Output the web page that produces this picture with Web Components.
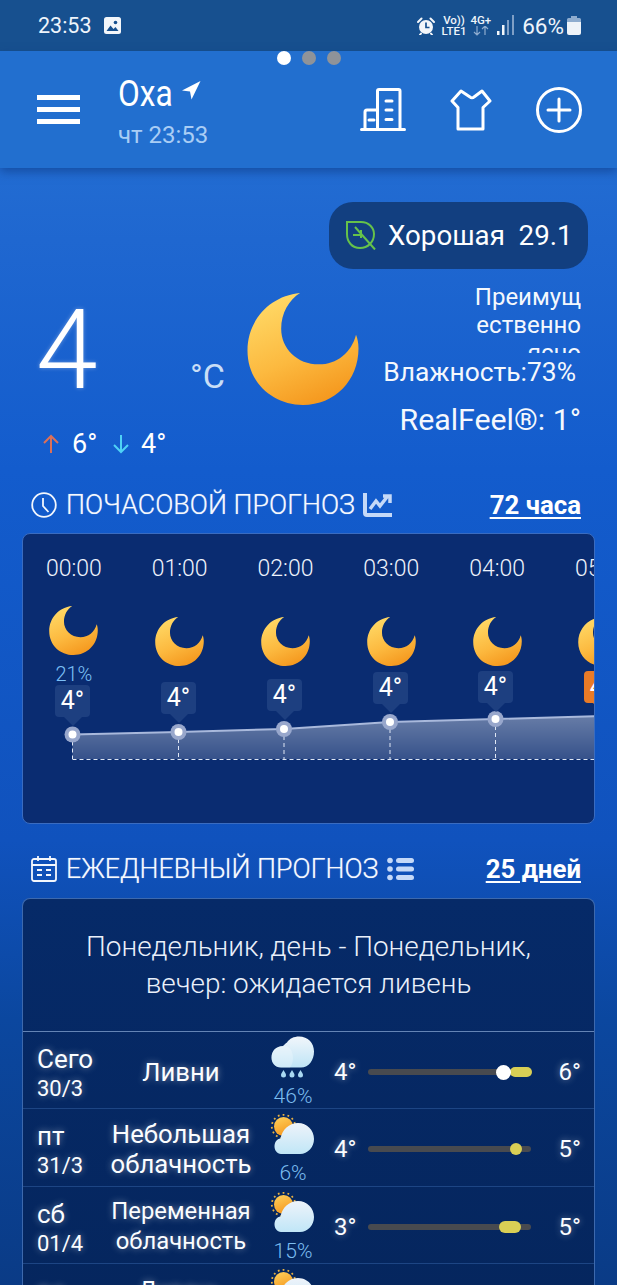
<!DOCTYPE html>
<html lang="ru"><head><meta charset="utf-8"><title>Погода</title>
<style>
html,body{margin:0;padding:0}
body{width:617px;height:1285px;overflow:hidden;font-family:Roboto,"Liberation Sans",sans-serif;color:#fff;background:#0a3b86}
weather-app{display:block}
</style></head><body>
<weather-app></weather-app>
<script>
const def=(n,html)=>{customElements.define(n,class extends HTMLElement{
 constructor(){super();const r=this.attachShadow({mode:'open'});r.innerHTML=typeof html==='function'?html(this):html;}
 connectedCallback(){if(typeof html==='function')this.shadowRoot.innerHTML=html(this);}
});};
const MOON='M53 0C22 3 0 28 0 58C0 90 25 113 56 113C88 113 112 88 112 56C112 50 111 46 109.5 42C105 60 90 72 72 72C50 72 34 56 34 36C34 20 42 7 53 0Z';
let uid=0;
def('moon-icon',h=>{const id='m'+(++uid);return `<style>:host{display:block;width:${h.getAttribute('size')||49}px;height:${h.getAttribute('size')||49}px}svg{display:block;width:100%;height:100%}</style>
<svg viewBox="0 0 112 113"><defs><linearGradient id="${id}" x1=".3" y1="0" x2=".72" y2="1"><stop offset="0" stop-color="#ffd966"/><stop offset=".55" stop-color="#fcb93f"/><stop offset="1" stop-color="#f4951b"/></linearGradient></defs><path d="${MOON}" fill="url(#${id})"/></svg>`});

def('status-bar',`<style>
:host{display:flex;align-items:center;height:51px;box-sizing:border-box;background:#17508f;padding:0 36px 0 38px;font-size:21.5px;color:#eef4fb}
svg{display:block;flex:none}
.sp{flex:1}
.net{display:flex;flex-direction:column;align-items:center;font-size:11.5px;line-height:10.5px;font-weight:500}
.pc{font-size:22.5px;margin-left:8px}
</style>
<span>23:53</span>
<svg style="margin-left:12px" width="17" height="17" viewBox="0 0 17 17"><rect width="17" height="17" rx="2.5" fill="#f3f6fa"/><path d="M2.5 14L6.5 8.5L9.5 12L11.5 10L14.5 14Z" fill="#17508f"/><circle cx="11.5" cy="5.5" r="1.8" fill="#17508f"/></svg>
<span class="sp"></span>
<svg width="18" height="18" viewBox="0 0 18 18"><circle cx="9" cy="10" r="7" fill="#f3f6fa"/><path d="M1 5L4.5 1.5M17 5L13.5 1.5M4 16.5L3 17.8M14 16.5L15 17.8" stroke="#f3f6fa" stroke-width="2" stroke-linecap="round"/><path d="M9 5.5V10.5H12.5" fill="none" stroke="#17508f" stroke-width="1.7"/></svg>
<span class="net" style="margin-left:7px"><span>Vo))</span><span>LTE1</span></span>
<span class="net" style="margin-left:4px"><span>4G+</span><svg width="16" height="10" viewBox="0 0 16 10"><path d="M4 0V9M1 6L4 9L7 6M12 9V0M9 3L12 0L15 3" fill="none" stroke="#8eaccf" stroke-width="1.2"/></svg></span>
<svg style="margin-left:6px" width="17" height="21" viewBox="0 0 17 21"><rect x="0" y="16" width="2.5" height="4" fill="#f3f6fa"/><rect x="5" y="10" width="2.5" height="10" fill="#f3f6fa"/><rect x="10" y="5" width="2" height="15" fill="#7f9fc6"/><rect x="15" y="0" width="2" height="20" fill="#7f9fc6"/></svg>
<span class="pc">66%</span>
<svg style="margin-left:3px" width="14" height="19" viewBox="0 0 14 19"><path d="M4 0H10V2H12.5Q14 2 14 3.5V6H0V3.5Q0 2 1.500 2H4Z" fill="#8eaccf"/><path d="M0 6H14V17Q14 19 12 19H2Q0 19 0 17Z" fill="#eef3f9"/></svg>`);

def('page-dots',`<style>:host{position:absolute;left:277px;top:51px;display:flex;gap:11px}
i{display:block;width:14px;height:14px;border-radius:50%;background:#8f9399}i:first-of-type{background:#fff}</style><i></i><i></i><i></i>`);

def('app-toolbar',`<style>
:host{display:flex;position:relative;align-items:center;height:117px;box-sizing:border-box;background:#226fcf;padding:0 25px 0 37px;box-shadow:0 4px 9px rgba(10,50,120,.5)}
.menu{display:flex;flex-direction:column;gap:7px;width:43px;margin-right:38px}.menu i{display:block;height:5px;background:#fff}
.city{flex:1;align-self:flex-start;padding-top:24px;display:flex;flex-direction:column}
.name{display:flex;align-items:flex-start;line-height:38px}
.name b{display:block;font-weight:400;font-size:36px;width:53px;transform:scaleX(.88);transform-origin:0 50%;white-space:nowrap}
.name svg{margin:6px 0 0 11px}
.when{font-size:24px;line-height:30px;color:#a9cdf5;margin-top:7px}
svg{display:block;flex:none}
</style>
<div class="menu"><i></i><i></i><i></i></div>
<div class="city"><div class="name"><b>Оха</b><svg width="19" height="19" viewBox="0 0 19 19"><path d="M18.500 0L0 9.500L8 10.500L9.500 18.500Z" fill="#fff"/></svg></div><div class="when">чт 23:53</div></div>
<svg width="46" height="44" viewBox="0 0 46 44" style="margin-right:44px"><g fill="none" stroke="#fff" stroke-width="3" stroke-linecap="round" stroke-linejoin="round"><path d="M1.500 41.500H44.500"/><path d="M5 41V24Q5 22 7 22H17.500"/><path d="M17.500 41V3Q17.500 1.500 19 1.500H38.500Q40 1.500 40 3V41"/><path d="M26 13H32M26 22H32M26 31.500H32M9 32H14"/></g></svg>
<svg width="42" height="42" viewBox="0 0 42 42" style="margin-right:44px"><path d="M11 2L20 8C21 9 23 9 24 8L32 2L40 12L33 18.500V40H8V18.500L2 12Z" fill="none" stroke="#fff" stroke-width="3" stroke-linejoin="round"/></svg>
<svg width="46" height="46" viewBox="0 0 46 46" style="margin-right:10px"><circle cx="23" cy="23" r="21.500" fill="none" stroke="#fff" stroke-width="3"/><path d="M23 12V34M12 23H34" stroke="#fff" stroke-width="3" stroke-linecap="round"/></svg>`);

def('air-pill',`<style>
:host{display:flex;align-items:center;align-self:flex-end;width:259px;height:67px;box-sizing:border-box;margin-right:29px;border-radius:24px;background:#123f80;padding-left:17px;font-size:27.7px;white-space:pre}
svg{display:block;margin-right:12px;flex:none}
</style><svg width="30" height="29" viewBox="0 0 30 29"><path d="M1 1H15C23 1 28 7 28 13C28 17 27 20 24 23C21 26 18 27 14 27C6 27 1 21 1 13Z" fill="none" stroke="#66c24a" stroke-width="2"/><path d="M9 6L29 28.500M15 9V17M7 14H15" fill="none" stroke="#66c24a" stroke-width="2"/></svg>Хорошая  29.1`);

def('current-weather',`<style>
:host{display:flex;flex-direction:column;padding-top:34px;height:312px;box-sizing:border-box}
.row{display:flex;flex:1;padding-left:38px}
.left{width:153px;display:flex;flex-direction:column;flex:none}
.big{font-size:111px;font-weight:300;line-height:115px;margin:24px 0 0 -2px;height:126px;text-shadow:0 0 4px rgba(255,255,255,.35)}
.hl{display:flex;align-items:center;font-size:27px;line-height:30px;margin-left:4px;margin-top:10px}
.hl svg{display:block;flex:none}
.unit{width:56px;flex:none;font-size:34px;font-weight:400;color:#c9def6;padding-top:87px;line-height:40px;box-sizing:border-box;margin-left:-1px;margin-right:1px}
moon-icon{margin-top:24px;flex:none}
.right{flex:1;display:flex;flex-direction:column;align-items:flex-end;padding-right:36px;padding-top:14px;min-width:0;white-space:nowrap;color:#f4f8fd}
.desc{width:112px;height:70px;overflow:hidden;font-size:24px;line-height:28px;text-align:right;word-break:break-all;white-space:normal}
.hum{font-size:26.4px;line-height:30px;margin-top:4px;margin-right:5px}
.rf{font-size:30.3px;line-height:32px;margin-top:17px}
</style>
<air-pill></air-pill>
<div class="row">
 <div class="left"><div class="big">4</div>
  <div class="hl"><svg width="18" height="20" viewBox="0 0 18 20"><path d="M9 19V2M2 9L9 2L16 9" fill="none" stroke="#dc7058" stroke-width="2"/></svg><span style="margin-left:12px;width:40px">6°</span><svg width="18" height="20" viewBox="0 0 18 20"><path d="M9 1V18M2 11L9 18L16 11" fill="none" stroke="#4fd2f6" stroke-width="2"/></svg><span style="margin-left:11px">4°</span></div></div>
 <div class="unit">°C</div>
 <moon-icon size="112"></moon-icon>
 <div class="right"><div class="desc">Преимущественно ясно</div><div class="hum">Влажность:73%</div><div class="rf">RealFeel®: 1°</div></div>
</div>`);

def('section-title',`<style>
:host{display:flex;align-items:center;height:50px;padding:0 36px 0 31px;font-size:26.8px;color:#f6f9fe}
.t{display:flex;align-items:center;flex:1;white-space:nowrap;font-weight:300;text-shadow:0 0 1px rgba(255,255,255,.6)}
::slotted(svg){display:block;flex:none}
a{font-weight:700;font-size:25.8px;color:#fff;text-decoration:underline;text-underline-offset:3px;text-decoration-thickness:2px}
.txt{margin:0 8px 0 9px}
</style><div class="t"><slot name="lead"></slot><span class="txt"><slot></slot></span><slot name="trail"></slot></div><a><slot name="link"></slot></a>`);

def('hour-col',h=>`<style>
:host{display:flex;flex-direction:column;align-items:center;width:105.800px;flex:none;padding-top:19px;box-sizing:border-box}
.t{font-size:23px;font-weight:300;line-height:32px;color:#eef3fc}
moon-icon{margin-top:${h.hasAttribute('pct')?21:32}px}
.p{font-size:20px;font-weight:300;line-height:24px;color:#7cc0f7;margin-top:7px}
</style><div class="t">${h.getAttribute('time')}</div><moon-icon size="49"></moon-icon>${h.hasAttribute('pct')?`<div class="p">${h.getAttribute('pct')}</div>`:''}`);

def('temp-tip',h=>{const o=h.hasAttribute('hot');const c=o?'#e97b27':'#1d3f80';return `<style>
:host{position:absolute;left:${h.getAttribute('x')}px;top:${h.getAttribute('y')}px;width:35px;height:42px}
.b{width:35px;height:32px;border-radius:4px;background:${c};text-align:center;font-size:25px;line-height:31px;color:#fff}
.a{width:0;height:0;margin:0 auto;border:9px solid transparent;border-top:9px solid ${c};border-bottom:0}
</style><div class="b">${h.getAttribute('v')}</div><div class="a"></div>`});

const pts=[[72.5,734.5],[178.5,732],[284,729],[390,722],[495.5,719],[601,716]];
def('hourly-card',()=>`<style>
:host{display:block;position:relative;height:291px;box-sizing:border-box;margin:0 22px;border:1px solid #3a6cc0;border-radius:8px;overflow:hidden;background:#0a2c71}
.cols{display:flex;margin-left:-2px}
svg{position:absolute;left:0;top:0}
</style>
<div class="cols"><hour-col time="00:00" pct="21%"></hour-col><hour-col time="01:00"></hour-col><hour-col time="02:00"></hour-col><hour-col time="03:00"></hour-col><hour-col time="04:00"></hour-col><hour-col time="05:00"></hour-col></div>
<svg width="572" height="289" viewBox="23 534 572 289"><defs><linearGradient id="ar" x1="0" y1="0" x2="0" y2="1"><stop offset="0" stop-color="#fff" stop-opacity=".38"/><stop offset="1" stop-color="#fff" stop-opacity=".18"/></linearGradient></defs>
<path d="M${pts.map(p=>p.join(' ')).join('L')}V759H72.500Z" fill="url(#ar)"/>
<path d="M${pts.map(p=>p.join(' ')).join('L')}" fill="none" stroke="#a9b9dc" stroke-width="2"/>
<path d="M72.500 759.500H601" stroke="#dfe7f5" stroke-width="1" stroke-dasharray="4 3" fill="none"/>
${pts.slice(0,5).map(p=>`<path d="M${p[0]} ${p[1]}V759" stroke="#dfe7f5" stroke-dasharray="4 3"/><circle cx="${p[0]}" cy="${p[1]}" r="8" fill="#98a7cc"/><circle cx="${p[0]}" cy="${p[1]}" r="4" fill="#fff"/>`).join('')}
</svg>
<temp-tip x="32" y="151" v="4°"></temp-tip><temp-tip x="138" y="148" v="4°"></temp-tip><temp-tip x="244" y="145" v="4°"></temp-tip><temp-tip x="350" y="138" v="4°"></temp-tip><temp-tip x="455" y="137" v="4°"></temp-tip><temp-tip x="561" y="137" v="4°" hot></temp-tip>`);

def('rain-icon',()=>`<style>:host{display:block;width:44px;height:43px}svg{display:block}</style>
<svg width="44" height="43" viewBox="0 0 44 43"><defs><linearGradient id="c1" x1="0" y1="0" x2="0" y2="1"><stop offset="0" stop-color="#f1f6fb"/><stop offset="1" stop-color="#bfe4f6"/></linearGradient></defs>
<path d="M10 31.500C4 31.500 0.500 27 0.500 21.500C0.500 15 5 10 12 10C13 9 14.500 7.500 16 6.500C18.500 2.500 23 0.500 28 0.500C37 0.500 43 7 43 15.500C43 24 38 31.500 30 31.500Z" fill="url(#c1)"/>
<path d="M12 10C17 9 22 14 22 22C22 26 21 29 19 31.500H10C4 31.500 0.500 27 0.500 21.500C0.500 15 5 10 12 10Z" fill="#fff" opacity=".25"/>
<path d="M12.500 34C14 36.500 15 37.500 15 39A2.500 2.500 0 0 1 10 39C10 37.500 11 36.500 12.500 34ZM21 34C22.500 36.500 23.500 37.500 23.500 39A2.500 2.500 0 0 1 18.500 39C18.500 37.500 19.500 36.500 21 34ZM29.500 34C31 36.500 32 37.500 32 39A2.500 2.500 0 0 1 27 39C27 37.500 28 36.500 29.500 34Z" fill="#a9d8f2"/></svg>`);
def('sun-cloud-icon',()=>`<style>:host{display:block;width:44px;height:43px}svg{display:block;overflow:visible}</style>
<svg width="44" height="43" viewBox="0 0 44 43"><defs><linearGradient id="c2" x1="0" y1="0" x2="0" y2="1"><stop offset="0" stop-color="#eef3fa"/><stop offset="1" stop-color="#c0e6f7"/></linearGradient><linearGradient id="s2" x1="0" y1="0" x2=".4" y2="1"><stop offset="0" stop-color="#ffd25c"/><stop offset="1" stop-color="#f59a22"/></linearGradient></defs>
<circle cx="12.500" cy="13.500" r="11.700" fill="none" stroke="#e9b243" stroke-width="1.800" stroke-dasharray="1.800 3.100"/>
<circle cx="12.500" cy="13.500" r="9.500" fill="url(#s2)"/>
<path d="M10 41C6 41 3.500 37 3.500 33.500C3.500 29 6 26 9.500 25.500C11 17 18 10 27 10C36 10 43 17 43 26C43 34 37 41 29 41Z" fill="url(#c2)"/></svg>`);

def('daily-row',h=>{const a=n=>h.getAttribute(n)||'';const p=a('bar').split(',');const dot=a('dot');return `<style>
:host{display:grid;grid-template-columns:70px 148px 13px 50px 16px 34px 163px 50px;height:77.330px;box-sizing:border-box;padding-left:14px;border-bottom:1px solid #1d4584;text-shadow:0 0 7px rgba(255,255,255,.45);color:#fbfdff;font-size:26px}
.d{line-height:30px;padding-top:12px;white-space:nowrap}.d span{font-size:22px;display:block}
.c{grid-column:2;display:flex;align-items:center;justify-content:center;text-align:center;line-height:30px;padding-top:${a('cp')||2}px;height:78px;box-sizing:border-box;white-space:pre-line;font-size:${a('cs')||25.7}px}
.i{grid-column:4;display:flex;flex-direction:column;align-items:center;padding-top:4px}
.p{font-size:21px;font-weight:300;line-height:24px;color:#7cbdf0;text-shadow:none;margin-top:5px}
.l{grid-column:6;line-height:30px;padding-top:25px;font-size:24px}
.h{grid-column:8;line-height:30px;padding-top:25px;text-align:right;font-size:24px}
.b{grid-column:7;position:relative;height:6px;margin-top:37px;border-radius:3px;background:#484a4f}
.r{position:absolute;top:-${(p[2]-6)/2}px;left:${p[0]}px;width:${p[1]}px;height:${p[2]}px;border-radius:7px;background:#d9cf55}
.w{position:absolute;left:${dot}px;top:-4.500px;width:15px;height:15px;border-radius:50%;background:#fff}
</style><div class="d">${a('day')}<span>${a('date')}</span></div><div class="c">${a('cond').replace('|','\n')}</div><div class="i">${a('icon')==='rain'?'<rain-icon></rain-icon>':'<sun-cloud-icon></sun-cloud-icon>'}<div class="p">${a('pct')}</div></div><div class="l">${a('lo')}</div><div class="b"><div class="r"></div>${dot?'<div class="w"></div>':''}</div><div class="h">${a('hi')}</div>`});

def('daily-card',()=>`<style>
:host{display:block;margin:0 22px;border:1px solid #3d69ad;border-bottom:0;border-radius:8px 8px 0 0;background:linear-gradient(#062a68,#05265e);height:400px;box-sizing:border-box;overflow:hidden}
.s{height:133px;box-sizing:border-box;border-bottom:1px solid #6484b5;display:flex;align-items:center;justify-content:center;text-align:center;font-size:27.900px;font-weight:300;line-height:37px;color:#eaf0fa;white-space:nowrap}
</style><div class="s"><div>Понедельник, день - Понедельник,<br>вечер: ожидается ливень</div></div>
<daily-row day="Сего" date="30/3" cond="Ливни" icon="rain" pct="46%" lo="4°" hi="6°" bar="142,22,10" dot="128"></daily-row>
<daily-row day="пт" date="31/3" cond="Небольшая|облачность" pct="6%" lo="4°" hi="5°" bar="142,12,12"></daily-row>
<daily-row day="сб" date="01/4" cond="Переменная|облачность" cs="23.800" cp="1" pct="15%" lo="3°" hi="5°" bar="131,22,12"></daily-row>
<daily-row day="вс" date="02/4" cond="Ливень|местами" cs="23.800" cp="5" pct="20%" lo="3°" hi="5°" bar="120,30,12"></daily-row>`);

def('weather-app',`<style>
:host{display:block;position:relative;width:617px;height:1285px;overflow:hidden;background:linear-gradient(180deg,#226cd2 168px,#1f67d0 240px,#135ccd 470px,#1052bd 840px,#0b479f 1020px,#0a3b86 1285px)}
main{display:flex;flex-direction:column}
.h1{margin-bottom:3px}.h2{margin-top:20px;margin-bottom:4px}
</style>
<status-bar></status-bar><app-toolbar></app-toolbar><page-dots></page-dots>
<main><current-weather></current-weather>
<section-title class="h1"><svg slot="lead" width="26" height="26" viewBox="0 0 26 26"><circle cx="13" cy="13" r="11.800" fill="none" stroke="#f3f7fd" stroke-width="1.800"/><path d="M12 6V14L17.500 20" fill="none" stroke="#f3f7fd" stroke-width="1.800"/></svg>ПОЧАСОВОЙ ПРОГНОЗ<svg slot="trail" width="29" height="25" viewBox="0 0 29 25"><path d="M2 0V20Q2 22 4 22H29" fill="none" stroke="#c5d9f8" stroke-width="4"/><path d="M7 16L13 8L17 13L24 4M20 3H27V10" fill="none" stroke="#c5d9f8" stroke-width="3.500"/></svg><span slot="link">72 часа</span></section-title>
<hourly-card></hourly-card>
<section-title class="h2"><svg slot="lead" width="26" height="26" viewBox="0 0 26 26"><g fill="none" stroke="#f3f7fd" stroke-width="1.800"><rect x="1" y="3" width="24" height="22" rx="2"/><path d="M1 9H25M7 0V5M19 0V5M6 14H11M15 14H20M6 19H11M15 19H20"/></g></svg>ЕЖЕДНЕВНЫЙ ПРОГНОЗ<svg slot="trail" width="27" height="24" viewBox="0 0 27 24"><g fill="#c5d9f8"><circle cx="3" cy="3.500" r="2.800"/><circle cx="3" cy="12" r="2.800"/><circle cx="3" cy="20.500" r="2.800"/><rect x="9" y="1" width="18" height="5" rx="2.500"/><rect x="9" y="9.500" width="18" height="5" rx="2.500"/><rect x="9" y="18" width="18" height="5" rx="2.500"/></g></svg><span slot="link">25 дней</span></section-title>
<daily-card></daily-card></main>`);
</script></body></html>
